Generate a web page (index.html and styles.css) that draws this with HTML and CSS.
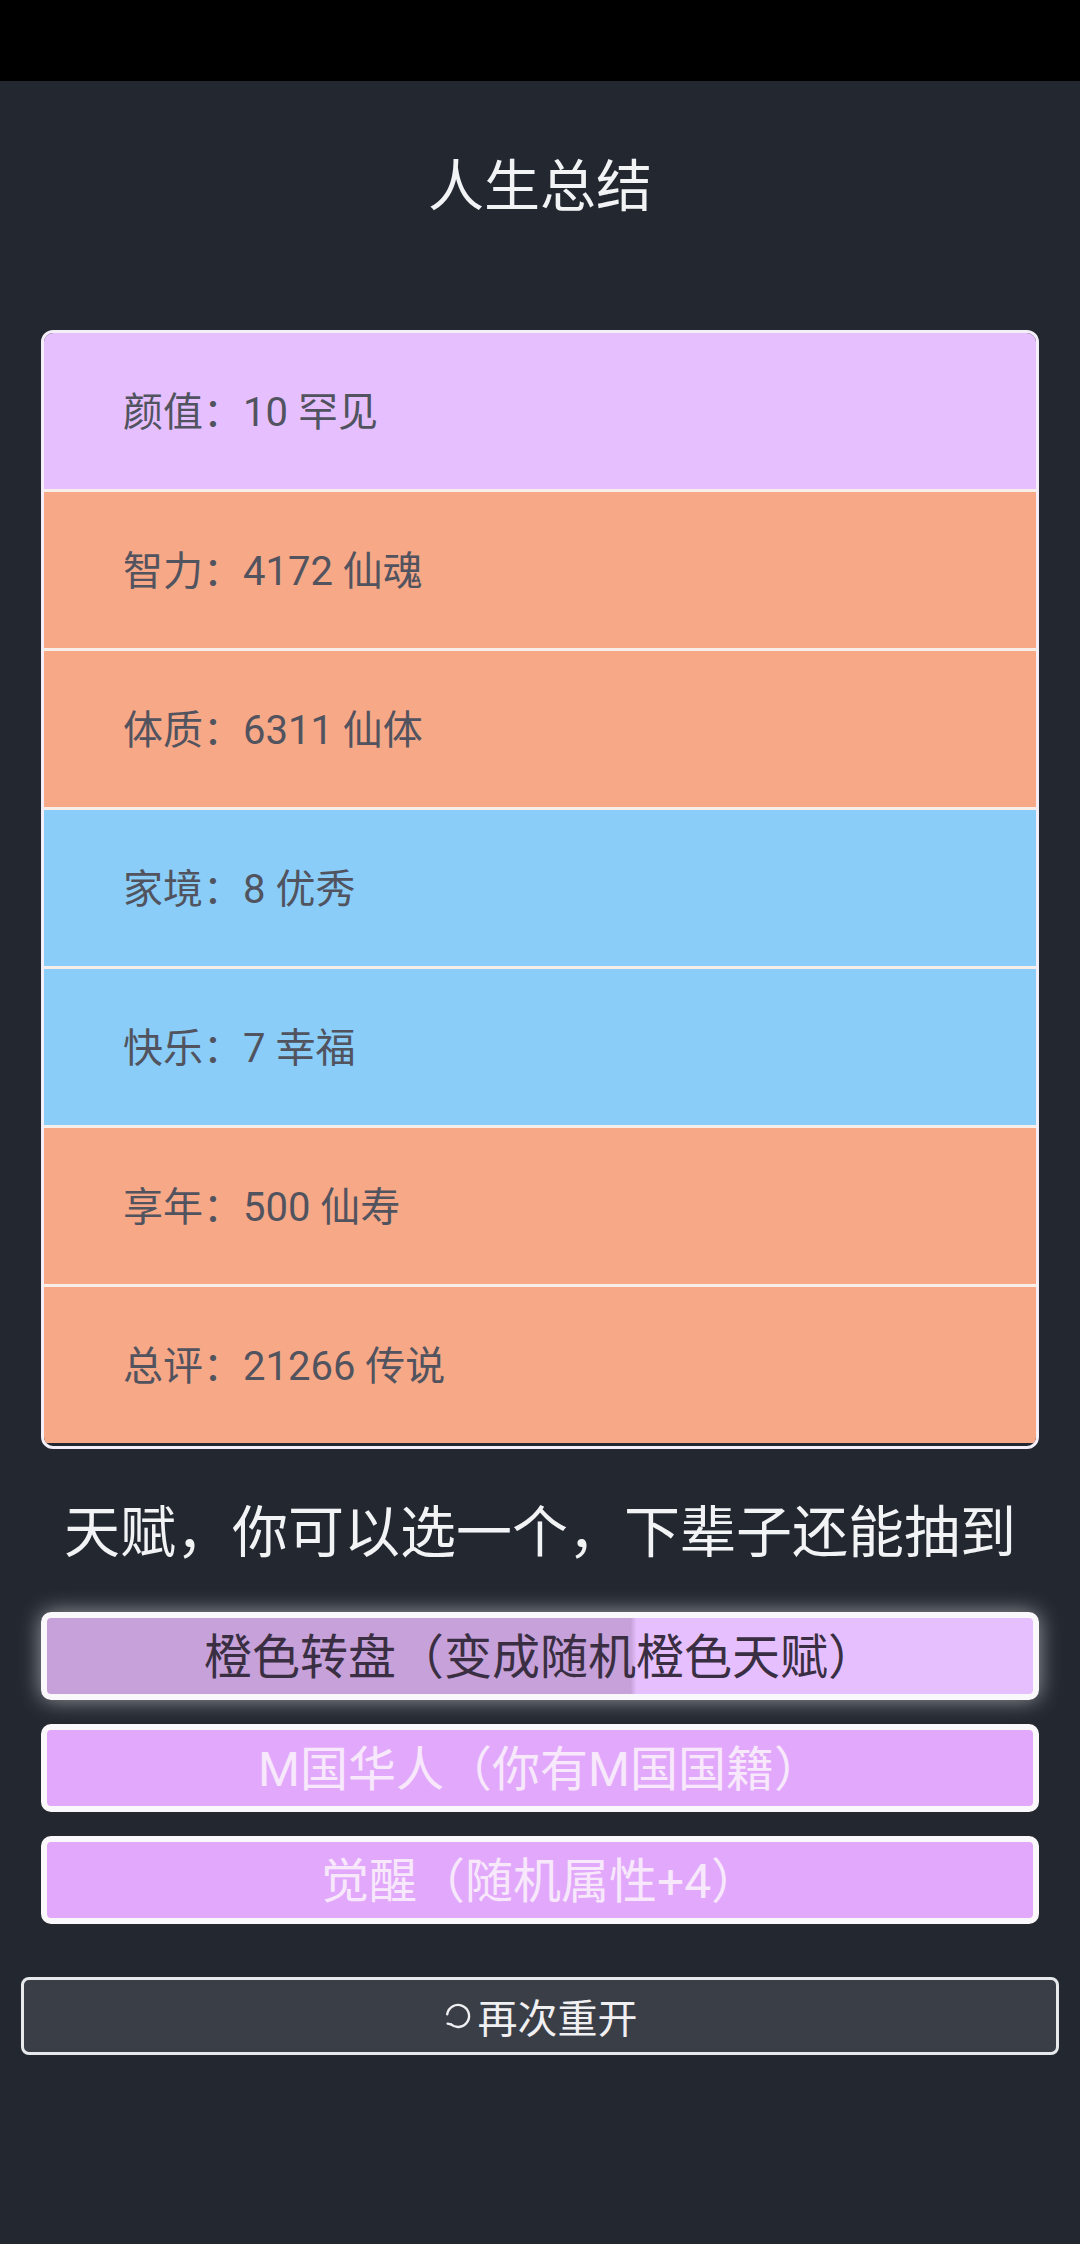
FILE: index.html
```html
<!DOCTYPE html>
<html lang="zh">
<head>
    <meta charset="UTF-8">
    <meta name="viewport" content="width=device-width, initial-scale=1.0">
    <title>人生总结</title>
    <link rel="stylesheet" href="styles.css">
</head>
<body>

    <!-- 状态栏 -->
    <div class="status-bar"></div>

    <div class="page">
        <h1 class="title">人生总结</h1>

        <!-- 属性总结 -->
        <ul class="summary">
            <li class="row grade-2">颜值：10 罕见</li>
            <li class="row grade-3">智力：4172 仙魂</li>
            <li class="row grade-3">体质：6311 仙体</li>
            <li class="row grade-1">家境：8 优秀</li>
            <li class="row grade-1">快乐：7 幸福</li>
            <li class="row grade-3">享年：500 仙寿</li>
            <li class="row grade-3">总评：21266 传说</li>
        </ul>

        <h2 class="subtitle">天赋，你可以选一个，下辈子还能抽到</h2>

        <!-- 可继承的天赋 -->
        <ul class="talents">
            <li class="talent selected">橙色转盘（变成随机橙色天赋）</li>
            <li class="talent">M国华人（你有M国国籍）</li>
            <li class="talent">觉醒（随机属性+4）</li>
        </ul>
    </div>

    <div class="restart-wrap">
        <button class="restart">
            <svg class="icon" width="30" height="30" viewBox="0 0 30 30">
                <path d="M4.2 13.2 A11 11 0 1 1 8 23.4" fill="none" stroke="#f0f0f2" stroke-width="2.4" stroke-linecap="round"/>
                <path d="M8 23.4 L4.6 22.6" fill="none" stroke="#f0f0f2" stroke-width="2.4" stroke-linecap="round"/>
            </svg>再次重开
        </button>
    </div>

</body>
</html>
```

FILE: styles.css
```css
/* 基本样式 */
body {
    margin: 0;
    padding: 0;
    background-color: #222730;
    font-family: Roboto, "Noto Sans CJK SC", sans-serif;
    color: #f2f2f4;
}

.status-bar {
    height: 81px;
    background-color: #000;
}

.page {
    padding: 0 41px;
}

/* 标题 */
.title {
    margin: 64px 0 0;
    font-size: 56px;
    line-height: 84px;
    font-weight: 400;
    text-align: center;
    color: #f2f3f5;
}

/* 属性列表 */
.summary {
    list-style: none;
    margin: 101px 0 0;
    padding: 0 0 3px;
    border: 3px solid #f4eef8;
    border-radius: 12px;
    overflow: hidden;
}

.row {
    height: 151px;
    padding: 0 0 5px 79px;
    display: flex;
    align-items: center;
    font-size: 40px;
    color: #51535f;
    border-bottom: 3px solid #f7eee9;
}

.row:last-child {
    border-bottom: none;
}

.grade-1 { background-color: #89cdf8; }
.grade-2 { background-color: #e6c0fe; }
.grade-3 { background-color: #f7a887; }

/* 天赋选择 */
.subtitle {
    margin: 42px 0 0;
    font-size: 56px;
    line-height: 84px;
    font-weight: 400;
    text-align: center;
    color: #f2f3f5;
    white-space: nowrap;
}

.talents {
    list-style: none;
    margin: 37px 0 0;
    padding: 0;
    display: flex;
    flex-direction: column;
    gap: 24px;
}

.talent {
    height: 70px;
    padding-bottom: 6px;
    display: flex;
    align-items: center;
    justify-content: center;
    border: 6px solid #fbf8fc;
    border-radius: 10px;
    background-color: #e2a8fc;
    font-size: 48px;
    color: #f7e8fb;
}

.talent.selected {
    background: linear-gradient(to right, #c6a1da 59.2%, #e6c0fe 59.8%);
    color: #3a2f42;
    box-shadow: 0 0 22px rgba(255, 255, 255, 0.55);
}

/* 重开按钮 */
.restart-wrap {
    padding: 0 21px;
    margin-top: 53px;
}

.restart {
    width: 100%;
    height: 78px;
    display: flex;
    align-items: center;
    justify-content: center;
    background-color: #3a3e47;
    border: 3px solid #e8e9ec;
    border-radius: 8px;
    font-family: Roboto, "Noto Sans CJK SC", sans-serif;
    font-size: 40px;
    color: #f0f0f2;
    padding: 0;
}

.icon {
    margin-right: 5px;
}
```
